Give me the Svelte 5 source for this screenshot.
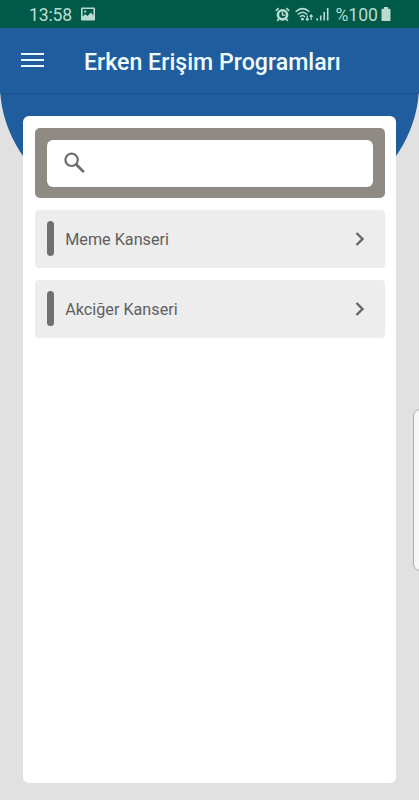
<script>
  const items = ['Meme Kanseri', 'Akciğer Kanseri'];
</script>

<div class="screen">
  <div class="arc"></div>
  <header class="status">
    <span class="time">13:58</span>
    <svg class="photo" width="14" height="14" viewBox="0 0 14 14">
      <path fill="#b9dcd1" fill-rule="evenodd" d="M1 0.5h12a1 1 0 0 1 1 1v11a1 1 0 0 1-1 1H1a1 1 0 0 1-1-1v-11a1 1 0 0 1 1-1zM1.6 2v7.6l2.6-2.3 2.3 1.7 3.3-3.6 2.6 3V2zM3.2 3.4h2v2h-2z" />
    </svg>
    <span class="spacer"></span>
    <svg class="alarm" width="15" height="15" viewBox="0 0 15 15">
      <circle cx="7.5" cy="7.8" r="4.6" fill="none" stroke="#b9dcd1" stroke-width="2.6" />
      <path d="M7.5 5v3.1h2.8" fill="none" stroke="#b9dcd1" stroke-width="1.4" />
      <path d="M0.8 3.8 3.6 1.2M14.2 3.8 11.4 1.2M3.6 12l-1.3 1.9M11.4 12l1.3 1.9" fill="none" stroke="#b9dcd1" stroke-width="1.7" />
    </svg>
    <svg class="wifi" width="19" height="15" viewBox="0 0 19 15">
      <g fill="none" stroke="#b9dcd1" stroke-width="1.5">
        <path d="M0.6 4.8Q7.5-1.6 14.4 4.8M2.8 7.5Q7.5 2.8 12.2 7.5M5 10Q7.5 7.2 10 10" />
        <path d="M12.3 8.5v5M10.8 11.7l1.5 1.7 1.5-1.7M16.2 13V8M14.7 9.7l1.5-1.7 1.5 1.7" stroke-width="1.2" />
      </g>
      <circle cx="7.5" cy="12.2" r="1.4" fill="#b9dcd1" />
    </svg>
    <svg class="signal" width="14" height="14" viewBox="0 0 14 14">
      <path d="M1.2 13.5v-2.3M4.7 13.5V8.5M8.2 13.5V5M11.7 13.5V1" stroke="#b9dcd1" stroke-width="1.6" />
    </svg>
    <span class="percent">%100</span>
    <svg class="battery" width="10" height="14" viewBox="0 0 10 14">
      <path d="M3 0h4v1.8h1.8q.7 0 .7.7v10.8q0 .7-.7.7H1.2q-.7 0-.7-.7V2.5q0-.7.7-.7H3z" fill="#b9dcd1" />
    </svg>
  </header>
  <nav class="bar">
    <button class="menu" aria-label="Menü"><i></i><i></i><i></i></button>
    <h1>Erken Erişim Programları</h1>
  </nav>
  <main class="card">
    <div class="search">
      <label class="field">
        <svg width="22" height="22" viewBox="0 0 22 22" fill="none" stroke="#6e6e6e">
          <circle cx="7.6" cy="7.8" r="6.2" stroke-width="2.2" />
          <path d="M12 12.2 19.8 20" stroke-width="2.8" />
        </svg>
        <input type="text" aria-label="Ara" />
      </label>
    </div>
    {#each items as item}
      <div class="row">
        <span class="mark"></span>
        <span class="label">{item}</span>
        <svg width="10" height="14" viewBox="0 0 10 14" fill="none" stroke="#666" stroke-width="2.4">
          <path d="M1.5 1 7.5 7l-6 6" />
        </svg>
      </div>
    {/each}
  </main>
  <div class="edge"></div>
</div>

<style>
  .screen {
    position: relative;
    display: flex;
    flex-direction: column;
    width: 419px;
    height: 800px;
    overflow: hidden;
    background: #e1e1e1;
    font-family: Roboto, sans-serif;
  }
  .arc {
    position: absolute;
    left: 0;
    top: -71px;
    width: 419px;
    height: 312px;
    border-radius: 50%;
    background: #205d9f;
  }
  .status {
    position: relative;
    display: flex;
    align-items: center;
    height: 28px;
    box-sizing: border-box;
    padding: 0 28px 0 29px;
    background: #015948;
    color: #b9dcd1;
    font-size: 17.6px;
    line-height: 28px;
  }
  .status span { position: relative; top: 1px; }
  .status svg { flex: none; }
  .time { letter-spacing: -0.15px; }
  .photo { margin-left: 9px; }
  .spacer { flex: 1; }
  .wifi { margin-left: 5px; }
  .signal { margin-left: 2px; }
  .percent { margin: 0 3px 0 5px; }
  .bar {
    position: relative;
    display: flex;
    align-items: center;
    height: 65px;
    padding: 0 21px;
    background: #205d9f;
    box-shadow: 0 1px 1px rgba(0, 30, 80, 0.2);
  }
  .menu {
    display: flex;
    flex-direction: column;
    gap: 4px;
    width: 23px;
    margin-top: -1px;
    padding: 0;
    border: 0;
    background: none;
  }
  .menu i { height: 2.3px; background: #ecfbff; }
  h1 {
    margin: 4px 0 0 40px;
    color: #f0fbff;
    font-size: 23.15px;
    font-weight: 500;
    line-height: 30px;
    white-space: nowrap;
  }
  .card {
    position: relative;
    display: flex;
    flex-direction: column;
    gap: 12px;
    box-sizing: border-box;
    width: 373px;
    height: 666.7px;
    margin: 23.3px 0 0 23px;
    padding: 11.7px 11.5px 12px 12px;
    border-radius: 6px;
    background: #fff;
  }
  .search {
    box-sizing: border-box;
    height: 70px;
    padding: 12px 11.5px 11px 11.5px;
    border-radius: 5px;
    background: #8f8a83;
  }
  .field {
    display: flex;
    align-items: center;
    height: 47px;
    padding-left: 17.5px;
    box-sizing: border-box;
    border-radius: 6px;
    background: #fff;
  }
  input { flex: 1; min-width: 0; border: 0; outline: 0; background: none; }
  .row {
    display: flex;
    align-items: center;
    box-sizing: border-box;
    height: 58px;
    padding: 0 20px 0 11.5px;
    border-radius: 4px;
    background: #ededed;
  }
  .mark { width: 7.2px; height: 35px; border-radius: 4px; background: #707070; }
  .label { flex: 1; margin-left: 11.5px; padding-top: 1px; color: #606060; font-size: 16.2px; }
  .edge {
    position: absolute;
    left: 413.4px;
    top: 409.4px;
    box-sizing: border-box;
    width: 14px;
    height: 162px;
    border: 1px solid #adadad;
    border-radius: 7px;
    background: #f6f6f6;
  }
</style>
